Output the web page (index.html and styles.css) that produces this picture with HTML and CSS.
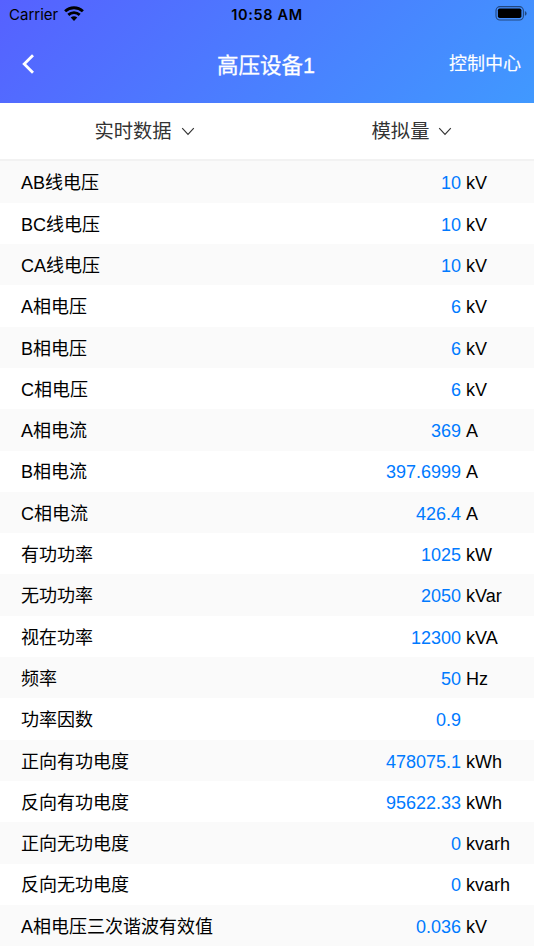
FILE: index.html
```html
<!DOCTYPE html>
<html lang="zh-CN">
<head>
<meta charset="utf-8">
<title>高压设备1</title>
<link rel="stylesheet" href="styles.css">
</head>
<body>
<header class="header">
  <div class="status">
    <div class="carrier"><span>Carrier</span>
      <svg class="wifi" viewBox="0 0 20 15" width="20" height="15"><g fill="none" stroke="#000" stroke-width="2.9"><path d="M1.1 5.200C6.200.5 13.800.5 18.900 5.200"/><path d="M4.300 8.800C7.600 5.900 12.400 5.900 15.700 8.800"/></g><path d="M6.700 11.600Q10 8.900 13.300 11.600L10 14.900Z"/></svg>
    </div>
    <div class="time">10:58 AM</div>
    <svg class="battery" viewBox="0 0 32 15" width="32" height="15"><rect x="1" y=".6" width="27.4" height="13.4" rx="4" fill="none" stroke="#000" stroke-opacity=".5" stroke-width="1.1"/><rect x="2.9" y="2.5" width="23.500" height="9.600" rx="1.800"/><path d="M29.900 5v4.800q1.700-.7 1.700-2.400T29.900 5Z" fill-opacity=".5"/></svg>
  </div>
  <nav class="nav">
    <svg class="back" viewBox="0 0 12 20" width="12" height="20"><path d="M11 1.200 2.200 10l8.800 8.800" fill="none" stroke="#fff" stroke-width="2.800"/></svg>
    <h1 class="title">高压设备1</h1>
    <a class="control">控制中心</a>
  </nav>
</header>
<div class="filters">
  <div class="filter filter-data"><span class="label">实时数据</span><svg class="chevron" viewBox="0 0 14 9" width="14" height="9"><path d="m1.200 1.200 5.800 6.100 5.800-6.100"/></svg></div>
  <div class="filter filter-type"><span class="label">模拟量</span><svg class="chevron" viewBox="0 0 14 9" width="14" height="9"><path d="m1.200 1.200 5.800 6.100 5.800-6.100"/></svg></div>
</div>
<main class="list">
  <div class="row"><span>AB线电压</span><span class="value">10</span><span class="unit">kV</span></div>
  <div class="row"><span>BC线电压</span><span class="value">10</span><span class="unit">kV</span></div>
  <div class="row"><span>CA线电压</span><span class="value">10</span><span class="unit">kV</span></div>
  <div class="row"><span>A相电压</span><span class="value">6</span><span class="unit">kV</span></div>
  <div class="row"><span>B相电压</span><span class="value">6</span><span class="unit">kV</span></div>
  <div class="row"><span>C相电压</span><span class="value">6</span><span class="unit">kV</span></div>
  <div class="row"><span>A相电流</span><span class="value">369</span><span class="unit">A</span></div>
  <div class="row"><span>B相电流</span><span class="value">397.6999</span><span class="unit">A</span></div>
  <div class="row"><span>C相电流</span><span class="value">426.4</span><span class="unit">A</span></div>
  <div class="row"><span>有功功率</span><span class="value">1025</span><span class="unit">kW</span></div>
  <div class="row"><span>无功功率</span><span class="value">2050</span><span class="unit">kVar</span></div>
  <div class="row"><span>视在功率</span><span class="value">12300</span><span class="unit">kVA</span></div>
  <div class="row"><span>频率</span><span class="value">50</span><span class="unit">Hz</span></div>
  <div class="row"><span>功率因数</span><span class="value">0.9</span><span class="unit"></span></div>
  <div class="row"><span>正向有功电度</span><span class="value">478075.1</span><span class="unit">kWh</span></div>
  <div class="row"><span>反向有功电度</span><span class="value">95622.33</span><span class="unit">kWh</span></div>
  <div class="row"><span>正向无功电度</span><span class="value">0</span><span class="unit">kvarh</span></div>
  <div class="row"><span>反向无功电度</span><span class="value">0</span><span class="unit">kvarh</span></div>
  <div class="row"><span>A相电压三次谐波有效值</span><span class="value">0.036</span><span class="unit">kV</span></div>
</main>
</body>
</html>
```
FILE: styles.css
```css
* { box-sizing: border-box; }
body {
  margin: 0;
  height: 950px;
  overflow: hidden;
  background: #fff;
  color: #000;
  font-family: "Liberation Sans", "Noto Sans CJK SC", sans-serif;
  font-size: 18px;
}
.header {
  height: 103.300px;
  background: linear-gradient(135deg, #5661ff 0%, #4099ff 100%);
}
.status {
  height: 28px;
  display: grid;
  grid-template-columns: 1fr auto 1fr;
  align-items: center;
  padding: 0 7px 0 9px;
  font-family: Inter, sans-serif;
  font-size: 15px;
}
.carrier { display: flex; align-items: center; gap: 6px; }
.wifi { margin-top: -1px; }
.time { font-weight: 600; font-size: 14.500px; letter-spacing: .65px; margin: 0 1px 0 -1px; }
.battery { justify-self: end; margin-top: -1px; }
.nav {
  height: 75px;
  display: grid;
  grid-template-columns: 1fr auto 1fr;
  align-items: center;
  padding: 0 13px 0 22px;
  color: #fff;
}
.back { margin-top: -4px; }
.title {
  margin: 0 0 0 -11px;
  font-size: 21.500px;
  line-height: 32px;
  font-weight: 400;
  -webkit-text-stroke: .3px #fff;
}
.control {
  justify-self: end;
  margin: -8px 0 0;
  -webkit-text-stroke: .15px #fff;
}
.filters {
  height: 58.200px;
  display: grid;
  grid-template-columns: 1fr 1fr;
  border-bottom: 2px solid #f2f2f2;
  font-size: 19.300px;
  color: #333;
}
.filter {
  display: flex;
  align-items: center;
  justify-content: center;
  gap: 9px;
}
.filter-data { padding-left: 22px; }
.filter-type { padding-left: 23px; }
.label { margin-top: -2px; }
.chevron { fill: none; stroke: #333; stroke-width: 1.150; }
.row {
  height: 41.300px;
  display: grid;
  grid-template-columns: 260px 180px 1fr;
  align-items: center;
  padding: 2.500px 0 0 21px;
  line-height: 26px;
}
.row:nth-child(odd) { background: #fafafa; }
.value { text-align: right; color: #007aff; }
.unit { padding-left: 5px; }
```
